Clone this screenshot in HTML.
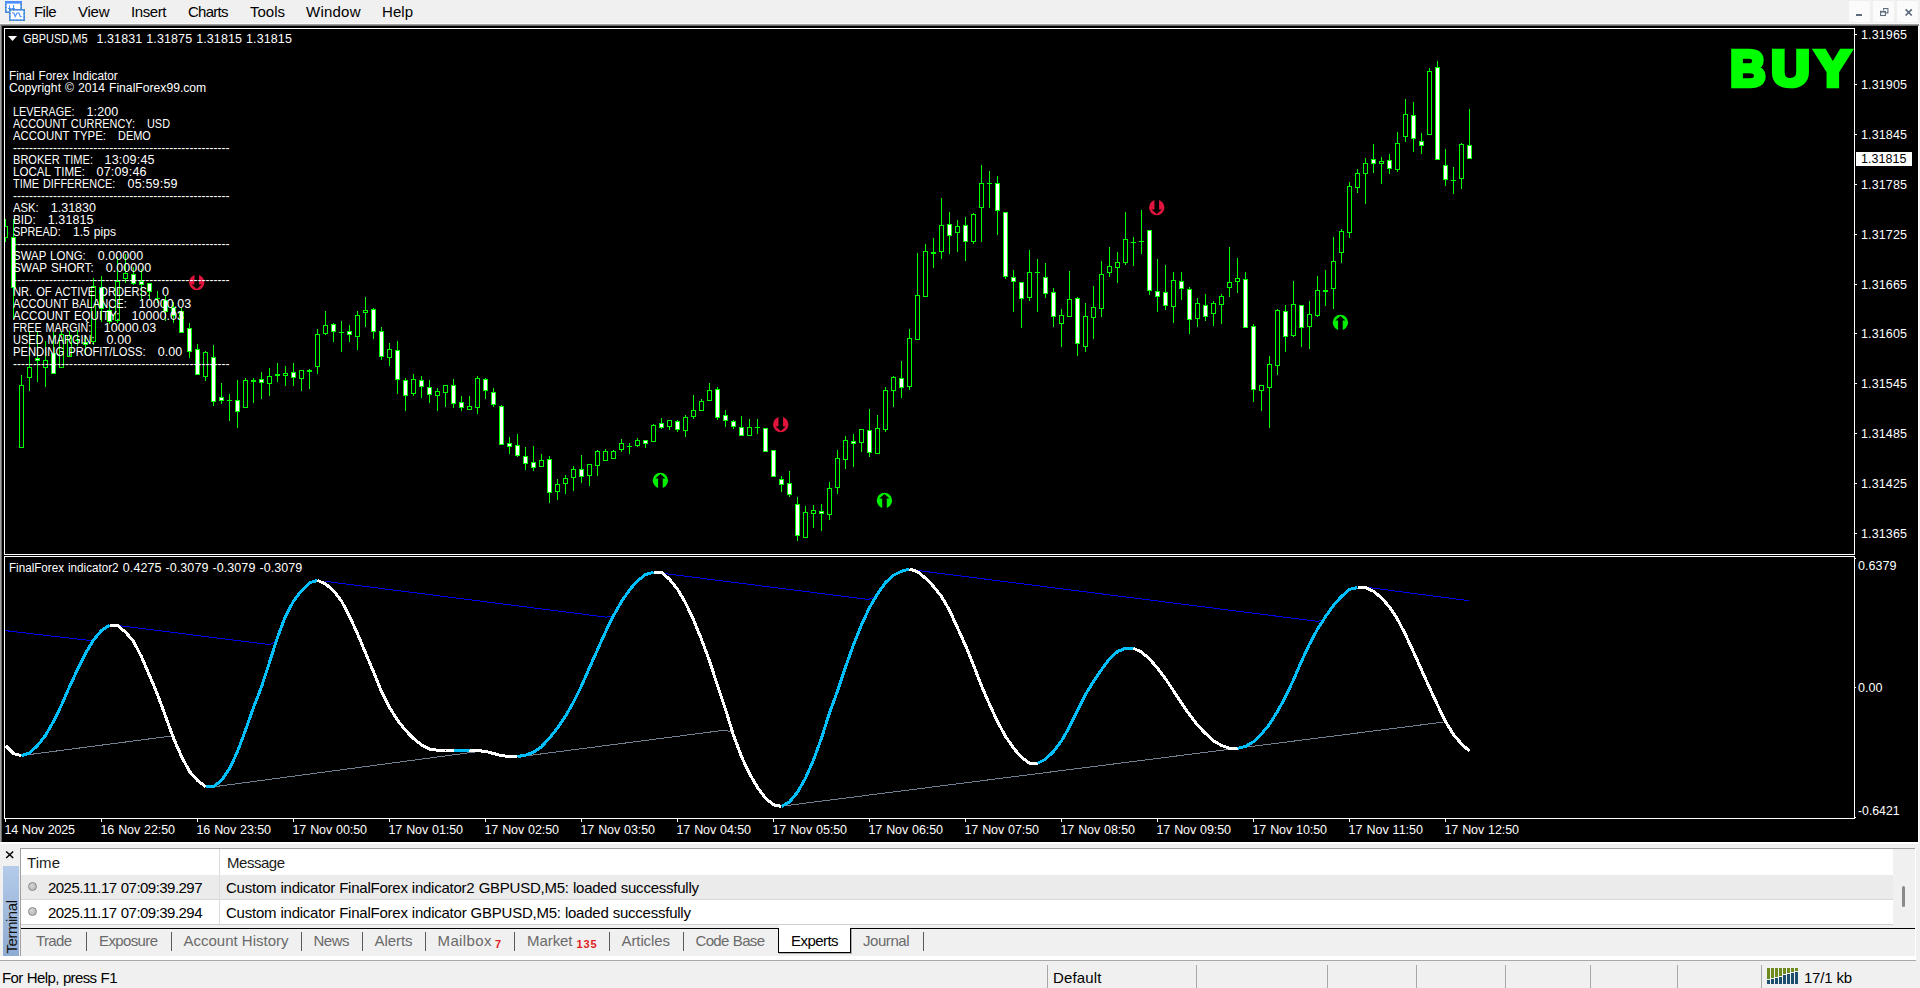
<!DOCTYPE html>
<html lang="en"><head><meta charset="utf-8"><title>GBPUSD,M5</title>
<style>
html,body{margin:0;padding:0;}
body{width:1920px;height:988px;overflow:hidden;background:#f0f0f0;position:relative;font-family:"Liberation Sans", Arial, sans-serif;}
.t{position:absolute;white-space:pre;line-height:1;font-family:"Liberation Sans", Arial, sans-serif;}
.abs{position:absolute;}
#menubar{position:absolute;left:0;top:0;width:1920px;height:24px;background:#f0f0f0;}
#mdi{position:absolute;left:0;top:24px;width:1920px;height:818px;background:#000;}
.wb{position:absolute;top:1px;width:21px;height:21px;background:#fbfbfb;border-radius:2px;}
</style></head><body>

<div id="menubar">
<svg class="abs" style="left:4px;top:0" width="24" height="24" viewBox="0 0 24 24">
<rect x="1.8" y="1.8" width="15.4" height="10.4" fill="#fff" stroke="#4c8dff" stroke-width="1.600"/>
<rect x="1.8" y="1.8" width="15.4" height="10.4" fill="none" stroke="#4a8c80" stroke-width="1.600" stroke-dasharray="1 2.500"/>
<rect x="1" y="1" width="17" height="2.600" fill="#4c8dff"/>
<path d="M4 8.500h3.500M5.500 5.500v5M8 8.500h3M9.500 5v4" stroke="#4c8dff" stroke-width="1.100" fill="none"/>
<rect x="5.800" y="9.800" width="14.400" height="10.400" fill="#fff" stroke="#4c8dff" stroke-width="1.600"/>
<rect x="5.800" y="9.800" width="14.400" height="10.400" fill="none" stroke="#4a8c80" stroke-width="1.600" stroke-dasharray="1 2.500"/>
<path d="M8 13h2l1.200 3.500l1.800-3.500h2l1.200 3.500h1.500" stroke="#4c8dff" stroke-width="1.100" fill="none"/>
</svg>
<span class="t" style="left:34.00px;top:4.30px;font-size:15px;color:#000;letter-spacing:-0.557px;">File</span>
<span class="t" style="left:78.00px;top:4.30px;font-size:15px;color:#000;letter-spacing:-0.248px;">View</span>
<span class="t" style="left:131.00px;top:4.30px;font-size:15px;color:#000;letter-spacing:-0.403px;">Insert</span>
<span class="t" style="left:188.00px;top:4.30px;font-size:15px;color:#000;letter-spacing:-0.736px;">Charts</span>
<span class="t" style="left:250.00px;top:4.30px;font-size:15px;color:#000;letter-spacing:-0.004px;">Tools</span>
<span class="t" style="left:306.00px;top:4.30px;font-size:15px;color:#000;letter-spacing:0.230px;">Window</span>
<span class="t" style="left:382.00px;top:4.30px;font-size:15px;color:#000;letter-spacing:0.050px;">Help</span>
<div class="wb" style="left:1849px"></div>
<div class="wb" style="left:1873px"></div>
<div class="wb" style="left:1897px"></div>
<svg class="abs" style="left:1849px;top:1px" width="69" height="21" viewBox="0 0 69 21">
<rect x="7" y="13" width="6" height="2" fill="#5d6b7c"/>
<path d="M34.600 9.200v-1.700h4.300v4.400h-1.800" fill="none" stroke="#5d6b7c" stroke-width="1.100"/>
<rect x="31.600" y="10.500" width="4.800" height="4" fill="none" stroke="#5d6b7c" stroke-width="1.100"/>
<rect x="31" y="9.900" width="6" height="1.600" fill="#5d6b7c"/>
<path d="M56.600 8.300l6.200 6.200M62.800 8.300l-6.200 6.200" stroke="#5d6b7c" stroke-width="1.700" fill="none"/>
</svg>
</div>
<div class="abs" style="left:0;top:23px;width:1920px;height:1px;background:#fafafa"></div>
<div class="abs" style="left:0;top:24px;width:1919px;height:1px;background:#a0a0a0"></div>
<div class="abs" style="left:1px;top:25px;width:1918px;height:1px;background:#696969"></div>
<div class="abs" style="left:0;top:26px;width:1918px;height:816px;background:#000"></div>
<div class="abs" style="left:0;top:24px;width:1px;height:819px;background:#a0a0a0"></div>
<div class="abs" style="left:1px;top:25px;width:1px;height:817px;background:#696969"></div>
<svg class="abs" style="left:0;top:0" width="1920" height="845" viewBox="0 0 1920 845" shape-rendering="crispEdges"><rect x="4" y="28" width="1851" height="1" fill="#fff"/>
<rect x="4" y="554" width="1851" height="1" fill="#fff"/>
<rect x="4" y="28" width="1" height="527" fill="#fff"/>
<rect x="1854" y="28" width="1" height="527" fill="#fff"/>
<rect x="4" y="556" width="1851" height="1" fill="#fff"/>
<rect x="4" y="818" width="1851" height="1" fill="#fff"/>
<rect x="4" y="556" width="1" height="263" fill="#fff"/>
<rect x="1854" y="556" width="1" height="263" fill="#fff"/>
<rect x="1855" y="34" width="2" height="1" fill="#fff"/>
<rect x="1855" y="84" width="2" height="1" fill="#fff"/>
<rect x="1855" y="134" width="2" height="1" fill="#fff"/>
<rect x="1855" y="184" width="2" height="1" fill="#fff"/>
<rect x="1855" y="234" width="2" height="1" fill="#fff"/>
<rect x="1855" y="284" width="2" height="1" fill="#fff"/>
<rect x="1855" y="333" width="2" height="1" fill="#fff"/>
<rect x="1855" y="383" width="2" height="1" fill="#fff"/>
<rect x="1855" y="433" width="2" height="1" fill="#fff"/>
<rect x="1855" y="483" width="2" height="1" fill="#fff"/>
<rect x="1855" y="533" width="2" height="1" fill="#fff"/>
<rect x="1855" y="558" width="1" height="1" fill="#fff"/>
<rect x="1855" y="687" width="1" height="1" fill="#fff"/>
<rect x="1855" y="817" width="1" height="1" fill="#fff"/>
<rect x="5" y="819" width="1" height="3" fill="#fff"/>
<rect x="101" y="819" width="1" height="3" fill="#fff"/>
<rect x="197" y="819" width="1" height="3" fill="#fff"/>
<rect x="293" y="819" width="1" height="3" fill="#fff"/>
<rect x="389" y="819" width="1" height="3" fill="#fff"/>
<rect x="485" y="819" width="1" height="3" fill="#fff"/>
<rect x="581" y="819" width="1" height="3" fill="#fff"/>
<rect x="677" y="819" width="1" height="3" fill="#fff"/>
<rect x="773" y="819" width="1" height="3" fill="#fff"/>
<rect x="869" y="819" width="1" height="3" fill="#fff"/>
<rect x="965" y="819" width="1" height="3" fill="#fff"/>
<rect x="1061" y="819" width="1" height="3" fill="#fff"/>
<rect x="1157" y="819" width="1" height="3" fill="#fff"/>
<rect x="1253" y="819" width="1" height="3" fill="#fff"/>
<rect x="1349" y="819" width="1" height="3" fill="#fff"/>
<rect x="1445" y="819" width="1" height="3" fill="#fff"/>
<path d="M8 36h9l-4.500 5z" fill="#fff" shape-rendering="auto"/>
<rect x="5" y="219" width="1" height="23" fill="#00ff00"/>
<rect x="3" y="226" width="5" height="12" fill="#00ff00"/>
<rect x="4" y="227" width="3" height="10" fill="#000"/>
<rect x="13" y="219" width="1" height="100" fill="#00ff00"/>
<rect x="11" y="237" width="5" height="51" fill="#00ff00"/>
<rect x="12" y="238" width="3" height="49" fill="#fff"/>
<rect x="21" y="375" width="1" height="73" fill="#00ff00"/>
<rect x="19" y="385" width="5" height="63" fill="#00ff00"/>
<rect x="20" y="386" width="3" height="61" fill="#000"/>
<rect x="29" y="332" width="1" height="59" fill="#00ff00"/>
<rect x="27" y="367" width="5" height="11" fill="#00ff00"/>
<rect x="28" y="368" width="3" height="9" fill="#000"/>
<rect x="37" y="332" width="1" height="50" fill="#00ff00"/>
<rect x="35" y="358" width="5" height="3" fill="#00ff00"/>
<rect x="36" y="359" width="3" height="1" fill="#fff"/>
<rect x="45" y="341" width="1" height="46" fill="#00ff00"/>
<rect x="43" y="360" width="5" height="8" fill="#00ff00"/>
<rect x="44" y="361" width="3" height="6" fill="#000"/>
<rect x="53" y="332" width="1" height="42" fill="#00ff00"/>
<rect x="51" y="353" width="5" height="21" fill="#00ff00"/>
<rect x="52" y="354" width="3" height="19" fill="#fff"/>
<rect x="61" y="331" width="1" height="37" fill="#00ff00"/>
<rect x="59" y="334" width="5" height="34" fill="#00ff00"/>
<rect x="60" y="335" width="3" height="32" fill="#000"/>
<rect x="69" y="331" width="1" height="26" fill="#00ff00"/>
<rect x="67" y="335" width="5" height="22" fill="#00ff00"/>
<rect x="68" y="336" width="3" height="20" fill="#000"/>
<rect x="77" y="330" width="1" height="16" fill="#00ff00"/>
<rect x="75" y="340" width="5" height="1" fill="#00ff00"/>
<rect x="85" y="335" width="1" height="20" fill="#00ff00"/>
<rect x="83" y="342" width="5" height="3" fill="#00ff00"/>
<rect x="84" y="343" width="3" height="1" fill="#fff"/>
<rect x="93" y="278" width="1" height="67" fill="#00ff00"/>
<rect x="91" y="286" width="5" height="56" fill="#00ff00"/>
<rect x="92" y="287" width="3" height="54" fill="#000"/>
<rect x="101" y="276" width="1" height="46" fill="#00ff00"/>
<rect x="99" y="287" width="5" height="22" fill="#00ff00"/>
<rect x="100" y="288" width="3" height="20" fill="#fff"/>
<rect x="109" y="306" width="1" height="18" fill="#00ff00"/>
<rect x="107" y="310" width="5" height="12" fill="#00ff00"/>
<rect x="108" y="311" width="3" height="10" fill="#fff"/>
<rect x="117" y="257" width="1" height="66" fill="#00ff00"/>
<rect x="115" y="281" width="5" height="40" fill="#00ff00"/>
<rect x="116" y="282" width="3" height="38" fill="#000"/>
<rect x="125" y="254" width="1" height="29" fill="#00ff00"/>
<rect x="123" y="273" width="5" height="6" fill="#00ff00"/>
<rect x="124" y="274" width="3" height="4" fill="#000"/>
<rect x="133" y="267" width="1" height="18" fill="#00ff00"/>
<rect x="131" y="274" width="5" height="10" fill="#00ff00"/>
<rect x="132" y="275" width="3" height="8" fill="#fff"/>
<rect x="141" y="269" width="1" height="31" fill="#00ff00"/>
<rect x="139" y="281" width="5" height="4" fill="#00ff00"/>
<rect x="140" y="282" width="3" height="2" fill="#fff"/>
<rect x="149" y="283" width="1" height="16" fill="#00ff00"/>
<rect x="147" y="283" width="5" height="9" fill="#00ff00"/>
<rect x="148" y="284" width="3" height="7" fill="#fff"/>
<rect x="157" y="291" width="1" height="12" fill="#00ff00"/>
<rect x="155" y="298" width="5" height="1" fill="#00ff00"/>
<rect x="165" y="296" width="1" height="25" fill="#00ff00"/>
<rect x="163" y="300" width="5" height="12" fill="#00ff00"/>
<rect x="164" y="301" width="3" height="10" fill="#fff"/>
<rect x="173" y="302" width="1" height="21" fill="#00ff00"/>
<rect x="171" y="307" width="5" height="9" fill="#00ff00"/>
<rect x="172" y="308" width="3" height="7" fill="#fff"/>
<rect x="181" y="308" width="1" height="25" fill="#00ff00"/>
<rect x="179" y="311" width="5" height="22" fill="#00ff00"/>
<rect x="180" y="312" width="3" height="20" fill="#fff"/>
<rect x="189" y="323" width="1" height="35" fill="#00ff00"/>
<rect x="187" y="328" width="5" height="24" fill="#00ff00"/>
<rect x="188" y="329" width="3" height="22" fill="#fff"/>
<rect x="197" y="344" width="1" height="31" fill="#00ff00"/>
<rect x="195" y="349" width="5" height="26" fill="#00ff00"/>
<rect x="196" y="350" width="3" height="24" fill="#fff"/>
<rect x="205" y="351" width="1" height="30" fill="#00ff00"/>
<rect x="203" y="352" width="5" height="25" fill="#00ff00"/>
<rect x="204" y="353" width="3" height="23" fill="#000"/>
<rect x="213" y="345" width="1" height="61" fill="#00ff00"/>
<rect x="211" y="357" width="5" height="45" fill="#00ff00"/>
<rect x="212" y="358" width="3" height="43" fill="#fff"/>
<rect x="221" y="383" width="1" height="21" fill="#00ff00"/>
<rect x="219" y="397" width="5" height="4" fill="#00ff00"/>
<rect x="220" y="398" width="3" height="2" fill="#fff"/>
<rect x="229" y="394" width="1" height="27" fill="#00ff00"/>
<rect x="227" y="400" width="5" height="1" fill="#00ff00"/>
<rect x="237" y="380" width="1" height="48" fill="#00ff00"/>
<rect x="235" y="400" width="5" height="12" fill="#00ff00"/>
<rect x="236" y="401" width="3" height="10" fill="#fff"/>
<rect x="245" y="378" width="1" height="30" fill="#00ff00"/>
<rect x="243" y="380" width="5" height="28" fill="#00ff00"/>
<rect x="244" y="381" width="3" height="26" fill="#000"/>
<rect x="253" y="378" width="1" height="25" fill="#00ff00"/>
<rect x="251" y="380" width="5" height="2" fill="#00ff00"/>
<rect x="261" y="372" width="1" height="27" fill="#00ff00"/>
<rect x="259" y="379" width="5" height="4" fill="#00ff00"/>
<rect x="260" y="380" width="3" height="2" fill="#fff"/>
<rect x="269" y="368" width="1" height="28" fill="#00ff00"/>
<rect x="267" y="376" width="5" height="8" fill="#00ff00"/>
<rect x="268" y="377" width="3" height="6" fill="#000"/>
<rect x="277" y="363" width="1" height="19" fill="#00ff00"/>
<rect x="275" y="374" width="5" height="2" fill="#00ff00"/>
<rect x="285" y="366" width="1" height="20" fill="#00ff00"/>
<rect x="283" y="373" width="5" height="3" fill="#00ff00"/>
<rect x="284" y="374" width="3" height="1" fill="#000"/>
<rect x="293" y="363" width="1" height="23" fill="#00ff00"/>
<rect x="291" y="372" width="5" height="6" fill="#00ff00"/>
<rect x="292" y="373" width="3" height="4" fill="#fff"/>
<rect x="301" y="370" width="1" height="21" fill="#00ff00"/>
<rect x="299" y="370" width="5" height="9" fill="#00ff00"/>
<rect x="300" y="371" width="3" height="7" fill="#000"/>
<rect x="309" y="369" width="1" height="20" fill="#00ff00"/>
<rect x="307" y="370" width="5" height="2" fill="#00ff00"/>
<rect x="317" y="329" width="1" height="45" fill="#00ff00"/>
<rect x="315" y="334" width="5" height="33" fill="#00ff00"/>
<rect x="316" y="335" width="3" height="31" fill="#000"/>
<rect x="325" y="311" width="1" height="24" fill="#00ff00"/>
<rect x="323" y="325" width="5" height="9" fill="#00ff00"/>
<rect x="324" y="326" width="3" height="7" fill="#000"/>
<rect x="333" y="323" width="1" height="19" fill="#00ff00"/>
<rect x="331" y="324" width="5" height="8" fill="#00ff00"/>
<rect x="332" y="325" width="3" height="6" fill="#fff"/>
<rect x="341" y="321" width="1" height="31" fill="#00ff00"/>
<rect x="339" y="332" width="5" height="1" fill="#00ff00"/>
<rect x="349" y="325" width="1" height="17" fill="#00ff00"/>
<rect x="347" y="331" width="5" height="4" fill="#00ff00"/>
<rect x="348" y="332" width="3" height="2" fill="#fff"/>
<rect x="357" y="311" width="1" height="39" fill="#00ff00"/>
<rect x="355" y="315" width="5" height="22" fill="#00ff00"/>
<rect x="356" y="316" width="3" height="20" fill="#000"/>
<rect x="365" y="297" width="1" height="30" fill="#00ff00"/>
<rect x="363" y="310" width="5" height="3" fill="#00ff00"/>
<rect x="364" y="311" width="3" height="1" fill="#000"/>
<rect x="373" y="308" width="1" height="31" fill="#00ff00"/>
<rect x="371" y="309" width="5" height="23" fill="#00ff00"/>
<rect x="372" y="310" width="3" height="21" fill="#fff"/>
<rect x="381" y="327" width="1" height="33" fill="#00ff00"/>
<rect x="379" y="331" width="5" height="26" fill="#00ff00"/>
<rect x="380" y="332" width="3" height="24" fill="#fff"/>
<rect x="389" y="343" width="1" height="23" fill="#00ff00"/>
<rect x="387" y="349" width="5" height="9" fill="#00ff00"/>
<rect x="388" y="350" width="3" height="7" fill="#000"/>
<rect x="397" y="341" width="1" height="53" fill="#00ff00"/>
<rect x="395" y="350" width="5" height="30" fill="#00ff00"/>
<rect x="396" y="351" width="3" height="28" fill="#fff"/>
<rect x="405" y="378" width="1" height="33" fill="#00ff00"/>
<rect x="403" y="380" width="5" height="16" fill="#00ff00"/>
<rect x="404" y="381" width="3" height="14" fill="#fff"/>
<rect x="413" y="374" width="1" height="22" fill="#00ff00"/>
<rect x="411" y="379" width="5" height="15" fill="#00ff00"/>
<rect x="412" y="380" width="3" height="13" fill="#000"/>
<rect x="421" y="376" width="1" height="22" fill="#00ff00"/>
<rect x="419" y="380" width="5" height="7" fill="#00ff00"/>
<rect x="420" y="381" width="3" height="5" fill="#fff"/>
<rect x="429" y="380" width="1" height="23" fill="#00ff00"/>
<rect x="427" y="387" width="5" height="8" fill="#00ff00"/>
<rect x="428" y="388" width="3" height="6" fill="#fff"/>
<rect x="437" y="388" width="1" height="23" fill="#00ff00"/>
<rect x="435" y="391" width="5" height="5" fill="#00ff00"/>
<rect x="436" y="392" width="3" height="3" fill="#000"/>
<rect x="445" y="385" width="1" height="22" fill="#00ff00"/>
<rect x="443" y="385" width="5" height="8" fill="#00ff00"/>
<rect x="444" y="386" width="3" height="6" fill="#000"/>
<rect x="453" y="379" width="1" height="29" fill="#00ff00"/>
<rect x="451" y="385" width="5" height="19" fill="#00ff00"/>
<rect x="452" y="386" width="3" height="17" fill="#fff"/>
<rect x="461" y="396" width="1" height="15" fill="#00ff00"/>
<rect x="459" y="402" width="5" height="6" fill="#00ff00"/>
<rect x="460" y="403" width="3" height="4" fill="#fff"/>
<rect x="469" y="396" width="1" height="14" fill="#00ff00"/>
<rect x="467" y="406" width="5" height="4" fill="#00ff00"/>
<rect x="468" y="407" width="3" height="2" fill="#000"/>
<rect x="477" y="376" width="1" height="38" fill="#00ff00"/>
<rect x="475" y="378" width="5" height="30" fill="#00ff00"/>
<rect x="476" y="379" width="3" height="28" fill="#000"/>
<rect x="485" y="378" width="1" height="21" fill="#00ff00"/>
<rect x="483" y="379" width="5" height="12" fill="#00ff00"/>
<rect x="484" y="380" width="3" height="10" fill="#fff"/>
<rect x="493" y="388" width="1" height="19" fill="#00ff00"/>
<rect x="491" y="392" width="5" height="13" fill="#00ff00"/>
<rect x="492" y="393" width="3" height="11" fill="#fff"/>
<rect x="501" y="405" width="1" height="40" fill="#00ff00"/>
<rect x="499" y="406" width="5" height="39" fill="#00ff00"/>
<rect x="500" y="407" width="3" height="37" fill="#fff"/>
<rect x="509" y="437" width="1" height="17" fill="#00ff00"/>
<rect x="507" y="443" width="5" height="4" fill="#00ff00"/>
<rect x="508" y="444" width="3" height="2" fill="#fff"/>
<rect x="517" y="434" width="1" height="23" fill="#00ff00"/>
<rect x="515" y="445" width="5" height="11" fill="#00ff00"/>
<rect x="516" y="446" width="3" height="9" fill="#fff"/>
<rect x="525" y="447" width="1" height="23" fill="#00ff00"/>
<rect x="523" y="456" width="5" height="8" fill="#00ff00"/>
<rect x="524" y="457" width="3" height="6" fill="#fff"/>
<rect x="533" y="446" width="1" height="25" fill="#00ff00"/>
<rect x="531" y="462" width="5" height="6" fill="#00ff00"/>
<rect x="532" y="463" width="3" height="4" fill="#fff"/>
<rect x="541" y="454" width="1" height="13" fill="#00ff00"/>
<rect x="539" y="460" width="5" height="7" fill="#00ff00"/>
<rect x="540" y="461" width="3" height="5" fill="#000"/>
<rect x="549" y="456" width="1" height="47" fill="#00ff00"/>
<rect x="547" y="459" width="5" height="34" fill="#00ff00"/>
<rect x="548" y="460" width="3" height="32" fill="#fff"/>
<rect x="557" y="479" width="1" height="21" fill="#00ff00"/>
<rect x="555" y="484" width="5" height="8" fill="#00ff00"/>
<rect x="556" y="485" width="3" height="6" fill="#000"/>
<rect x="565" y="475" width="1" height="19" fill="#00ff00"/>
<rect x="563" y="478" width="5" height="6" fill="#00ff00"/>
<rect x="564" y="479" width="3" height="4" fill="#000"/>
<rect x="573" y="466" width="1" height="25" fill="#00ff00"/>
<rect x="571" y="469" width="5" height="9" fill="#00ff00"/>
<rect x="572" y="470" width="3" height="7" fill="#000"/>
<rect x="581" y="455" width="1" height="28" fill="#00ff00"/>
<rect x="579" y="469" width="5" height="8" fill="#00ff00"/>
<rect x="580" y="470" width="3" height="6" fill="#fff"/>
<rect x="589" y="464" width="1" height="22" fill="#00ff00"/>
<rect x="587" y="464" width="5" height="12" fill="#00ff00"/>
<rect x="588" y="465" width="3" height="10" fill="#000"/>
<rect x="597" y="450" width="1" height="26" fill="#00ff00"/>
<rect x="595" y="451" width="5" height="15" fill="#00ff00"/>
<rect x="596" y="452" width="3" height="13" fill="#000"/>
<rect x="605" y="449" width="1" height="12" fill="#00ff00"/>
<rect x="603" y="451" width="5" height="10" fill="#00ff00"/>
<rect x="604" y="452" width="3" height="8" fill="#000"/>
<rect x="613" y="450" width="1" height="9" fill="#00ff00"/>
<rect x="611" y="451" width="5" height="8" fill="#00ff00"/>
<rect x="612" y="452" width="3" height="6" fill="#000"/>
<rect x="621" y="439" width="1" height="13" fill="#00ff00"/>
<rect x="619" y="443" width="5" height="7" fill="#00ff00"/>
<rect x="620" y="444" width="3" height="5" fill="#000"/>
<rect x="629" y="443" width="1" height="11" fill="#00ff00"/>
<rect x="627" y="446" width="5" height="1" fill="#00ff00"/>
<rect x="637" y="438" width="1" height="9" fill="#00ff00"/>
<rect x="635" y="440" width="5" height="6" fill="#00ff00"/>
<rect x="636" y="441" width="3" height="4" fill="#000"/>
<rect x="645" y="440" width="1" height="8" fill="#00ff00"/>
<rect x="643" y="440" width="5" height="4" fill="#00ff00"/>
<rect x="644" y="441" width="3" height="2" fill="#fff"/>
<rect x="653" y="424" width="1" height="18" fill="#00ff00"/>
<rect x="651" y="425" width="5" height="17" fill="#00ff00"/>
<rect x="652" y="426" width="3" height="15" fill="#000"/>
<rect x="661" y="418" width="1" height="11" fill="#00ff00"/>
<rect x="659" y="423" width="5" height="5" fill="#00ff00"/>
<rect x="660" y="424" width="3" height="3" fill="#fff"/>
<rect x="669" y="420" width="1" height="10" fill="#00ff00"/>
<rect x="667" y="420" width="5" height="7" fill="#00ff00"/>
<rect x="668" y="421" width="3" height="5" fill="#000"/>
<rect x="677" y="420" width="1" height="12" fill="#00ff00"/>
<rect x="675" y="421" width="5" height="9" fill="#00ff00"/>
<rect x="676" y="422" width="3" height="7" fill="#fff"/>
<rect x="685" y="415" width="1" height="22" fill="#00ff00"/>
<rect x="683" y="417" width="5" height="14" fill="#00ff00"/>
<rect x="684" y="418" width="3" height="12" fill="#000"/>
<rect x="693" y="395" width="1" height="24" fill="#00ff00"/>
<rect x="691" y="410" width="5" height="7" fill="#00ff00"/>
<rect x="692" y="411" width="3" height="5" fill="#000"/>
<rect x="701" y="399" width="1" height="12" fill="#00ff00"/>
<rect x="699" y="401" width="5" height="10" fill="#00ff00"/>
<rect x="700" y="402" width="3" height="8" fill="#000"/>
<rect x="709" y="383" width="1" height="18" fill="#00ff00"/>
<rect x="707" y="390" width="5" height="11" fill="#00ff00"/>
<rect x="708" y="391" width="3" height="9" fill="#000"/>
<rect x="717" y="387" width="1" height="33" fill="#00ff00"/>
<rect x="715" y="389" width="5" height="29" fill="#00ff00"/>
<rect x="716" y="390" width="3" height="27" fill="#fff"/>
<rect x="725" y="410" width="1" height="17" fill="#00ff00"/>
<rect x="723" y="415" width="5" height="6" fill="#00ff00"/>
<rect x="724" y="416" width="3" height="4" fill="#fff"/>
<rect x="733" y="420" width="1" height="9" fill="#00ff00"/>
<rect x="731" y="421" width="5" height="6" fill="#00ff00"/>
<rect x="732" y="422" width="3" height="4" fill="#fff"/>
<rect x="741" y="416" width="1" height="20" fill="#00ff00"/>
<rect x="739" y="427" width="5" height="9" fill="#00ff00"/>
<rect x="740" y="428" width="3" height="7" fill="#fff"/>
<rect x="749" y="419" width="1" height="17" fill="#00ff00"/>
<rect x="747" y="427" width="5" height="9" fill="#00ff00"/>
<rect x="748" y="428" width="3" height="7" fill="#000"/>
<rect x="757" y="419" width="1" height="15" fill="#00ff00"/>
<rect x="755" y="427" width="5" height="1" fill="#00ff00"/>
<rect x="765" y="428" width="1" height="24" fill="#00ff00"/>
<rect x="763" y="428" width="5" height="24" fill="#00ff00"/>
<rect x="764" y="429" width="3" height="22" fill="#fff"/>
<rect x="773" y="450" width="1" height="27" fill="#00ff00"/>
<rect x="771" y="450" width="5" height="27" fill="#00ff00"/>
<rect x="772" y="451" width="3" height="25" fill="#fff"/>
<rect x="781" y="476" width="1" height="16" fill="#00ff00"/>
<rect x="779" y="479" width="5" height="6" fill="#00ff00"/>
<rect x="780" y="480" width="3" height="4" fill="#fff"/>
<rect x="789" y="471" width="1" height="26" fill="#00ff00"/>
<rect x="787" y="483" width="5" height="12" fill="#00ff00"/>
<rect x="788" y="484" width="3" height="10" fill="#fff"/>
<rect x="797" y="497" width="1" height="44" fill="#00ff00"/>
<rect x="795" y="504" width="5" height="32" fill="#00ff00"/>
<rect x="796" y="505" width="3" height="30" fill="#fff"/>
<rect x="805" y="506" width="1" height="32" fill="#00ff00"/>
<rect x="803" y="512" width="5" height="26" fill="#00ff00"/>
<rect x="804" y="513" width="3" height="24" fill="#000"/>
<rect x="813" y="505" width="1" height="23" fill="#00ff00"/>
<rect x="811" y="510" width="5" height="4" fill="#00ff00"/>
<rect x="812" y="511" width="3" height="2" fill="#000"/>
<rect x="821" y="504" width="1" height="27" fill="#00ff00"/>
<rect x="819" y="511" width="5" height="3" fill="#00ff00"/>
<rect x="820" y="512" width="3" height="1" fill="#fff"/>
<rect x="829" y="482" width="1" height="38" fill="#00ff00"/>
<rect x="827" y="488" width="5" height="27" fill="#00ff00"/>
<rect x="828" y="489" width="3" height="25" fill="#000"/>
<rect x="837" y="450" width="1" height="44" fill="#00ff00"/>
<rect x="835" y="458" width="5" height="30" fill="#00ff00"/>
<rect x="836" y="459" width="3" height="28" fill="#000"/>
<rect x="845" y="436" width="1" height="33" fill="#00ff00"/>
<rect x="843" y="440" width="5" height="20" fill="#00ff00"/>
<rect x="844" y="441" width="3" height="18" fill="#000"/>
<rect x="853" y="434" width="1" height="33" fill="#00ff00"/>
<rect x="851" y="441" width="5" height="3" fill="#00ff00"/>
<rect x="852" y="442" width="3" height="1" fill="#fff"/>
<rect x="861" y="429" width="1" height="23" fill="#00ff00"/>
<rect x="859" y="429" width="5" height="14" fill="#00ff00"/>
<rect x="860" y="430" width="3" height="12" fill="#000"/>
<rect x="869" y="409" width="1" height="48" fill="#00ff00"/>
<rect x="867" y="430" width="5" height="23" fill="#00ff00"/>
<rect x="868" y="431" width="3" height="21" fill="#fff"/>
<rect x="877" y="415" width="1" height="39" fill="#00ff00"/>
<rect x="875" y="428" width="5" height="26" fill="#00ff00"/>
<rect x="876" y="429" width="3" height="24" fill="#000"/>
<rect x="885" y="387" width="1" height="45" fill="#00ff00"/>
<rect x="883" y="390" width="5" height="40" fill="#00ff00"/>
<rect x="884" y="391" width="3" height="38" fill="#000"/>
<rect x="893" y="376" width="1" height="31" fill="#00ff00"/>
<rect x="891" y="377" width="5" height="14" fill="#00ff00"/>
<rect x="892" y="378" width="3" height="12" fill="#000"/>
<rect x="901" y="361" width="1" height="37" fill="#00ff00"/>
<rect x="899" y="378" width="5" height="10" fill="#00ff00"/>
<rect x="900" y="379" width="3" height="8" fill="#fff"/>
<rect x="909" y="329" width="1" height="61" fill="#00ff00"/>
<rect x="907" y="338" width="5" height="49" fill="#00ff00"/>
<rect x="908" y="339" width="3" height="47" fill="#000"/>
<rect x="917" y="253" width="1" height="87" fill="#00ff00"/>
<rect x="915" y="295" width="5" height="45" fill="#00ff00"/>
<rect x="916" y="296" width="3" height="43" fill="#000"/>
<rect x="925" y="244" width="1" height="53" fill="#00ff00"/>
<rect x="923" y="251" width="5" height="46" fill="#00ff00"/>
<rect x="924" y="252" width="3" height="44" fill="#000"/>
<rect x="933" y="238" width="1" height="30" fill="#00ff00"/>
<rect x="931" y="252" width="5" height="2" fill="#00ff00"/>
<rect x="941" y="198" width="1" height="61" fill="#00ff00"/>
<rect x="939" y="225" width="5" height="27" fill="#00ff00"/>
<rect x="940" y="226" width="3" height="25" fill="#000"/>
<rect x="949" y="212" width="1" height="42" fill="#00ff00"/>
<rect x="947" y="224" width="5" height="12" fill="#00ff00"/>
<rect x="948" y="225" width="3" height="10" fill="#fff"/>
<rect x="957" y="220" width="1" height="32" fill="#00ff00"/>
<rect x="955" y="226" width="5" height="7" fill="#00ff00"/>
<rect x="956" y="227" width="3" height="5" fill="#000"/>
<rect x="965" y="217" width="1" height="44" fill="#00ff00"/>
<rect x="963" y="225" width="5" height="17" fill="#00ff00"/>
<rect x="964" y="226" width="3" height="15" fill="#fff"/>
<rect x="973" y="213" width="1" height="31" fill="#00ff00"/>
<rect x="971" y="214" width="5" height="28" fill="#00ff00"/>
<rect x="972" y="215" width="3" height="26" fill="#000"/>
<rect x="981" y="165" width="1" height="77" fill="#00ff00"/>
<rect x="979" y="183" width="5" height="25" fill="#00ff00"/>
<rect x="980" y="184" width="3" height="23" fill="#000"/>
<rect x="989" y="171" width="1" height="37" fill="#00ff00"/>
<rect x="987" y="183" width="5" height="1" fill="#00ff00"/>
<rect x="997" y="176" width="1" height="59" fill="#00ff00"/>
<rect x="995" y="183" width="5" height="28" fill="#00ff00"/>
<rect x="996" y="184" width="3" height="26" fill="#fff"/>
<rect x="1005" y="212" width="1" height="67" fill="#00ff00"/>
<rect x="1003" y="212" width="5" height="65" fill="#00ff00"/>
<rect x="1004" y="213" width="3" height="63" fill="#fff"/>
<rect x="1013" y="270" width="1" height="42" fill="#00ff00"/>
<rect x="1011" y="277" width="5" height="5" fill="#00ff00"/>
<rect x="1012" y="278" width="3" height="3" fill="#fff"/>
<rect x="1021" y="282" width="1" height="46" fill="#00ff00"/>
<rect x="1019" y="282" width="5" height="17" fill="#00ff00"/>
<rect x="1020" y="283" width="3" height="15" fill="#fff"/>
<rect x="1029" y="250" width="1" height="51" fill="#00ff00"/>
<rect x="1027" y="272" width="5" height="26" fill="#00ff00"/>
<rect x="1028" y="273" width="3" height="24" fill="#000"/>
<rect x="1037" y="259" width="1" height="53" fill="#00ff00"/>
<rect x="1035" y="272" width="5" height="1" fill="#00ff00"/>
<rect x="1045" y="263" width="1" height="35" fill="#00ff00"/>
<rect x="1043" y="277" width="5" height="17" fill="#00ff00"/>
<rect x="1044" y="278" width="3" height="15" fill="#fff"/>
<rect x="1053" y="288" width="1" height="39" fill="#00ff00"/>
<rect x="1051" y="292" width="5" height="25" fill="#00ff00"/>
<rect x="1052" y="293" width="3" height="23" fill="#fff"/>
<rect x="1061" y="309" width="1" height="38" fill="#00ff00"/>
<rect x="1059" y="315" width="5" height="9" fill="#00ff00"/>
<rect x="1060" y="316" width="3" height="7" fill="#000"/>
<rect x="1069" y="271" width="1" height="46" fill="#00ff00"/>
<rect x="1067" y="299" width="5" height="18" fill="#00ff00"/>
<rect x="1068" y="300" width="3" height="16" fill="#000"/>
<rect x="1077" y="297" width="1" height="59" fill="#00ff00"/>
<rect x="1075" y="298" width="5" height="46" fill="#00ff00"/>
<rect x="1076" y="299" width="3" height="44" fill="#fff"/>
<rect x="1085" y="303" width="1" height="49" fill="#00ff00"/>
<rect x="1083" y="316" width="5" height="31" fill="#00ff00"/>
<rect x="1084" y="317" width="3" height="29" fill="#000"/>
<rect x="1093" y="286" width="1" height="53" fill="#00ff00"/>
<rect x="1091" y="307" width="5" height="11" fill="#00ff00"/>
<rect x="1092" y="308" width="3" height="9" fill="#000"/>
<rect x="1101" y="261" width="1" height="56" fill="#00ff00"/>
<rect x="1099" y="274" width="5" height="35" fill="#00ff00"/>
<rect x="1100" y="275" width="3" height="33" fill="#000"/>
<rect x="1109" y="247" width="1" height="30" fill="#00ff00"/>
<rect x="1107" y="266" width="5" height="7" fill="#00ff00"/>
<rect x="1108" y="267" width="3" height="5" fill="#000"/>
<rect x="1117" y="252" width="1" height="31" fill="#00ff00"/>
<rect x="1115" y="262" width="5" height="6" fill="#00ff00"/>
<rect x="1116" y="263" width="3" height="4" fill="#000"/>
<rect x="1125" y="212" width="1" height="53" fill="#00ff00"/>
<rect x="1123" y="239" width="5" height="24" fill="#00ff00"/>
<rect x="1124" y="240" width="3" height="22" fill="#000"/>
<rect x="1133" y="237" width="1" height="29" fill="#00ff00"/>
<rect x="1131" y="242" width="5" height="1" fill="#00ff00"/>
<rect x="1141" y="210" width="1" height="44" fill="#00ff00"/>
<rect x="1139" y="241" width="5" height="1" fill="#00ff00"/>
<rect x="1149" y="230" width="1" height="65" fill="#00ff00"/>
<rect x="1147" y="230" width="5" height="61" fill="#00ff00"/>
<rect x="1148" y="231" width="3" height="59" fill="#fff"/>
<rect x="1157" y="259" width="1" height="53" fill="#00ff00"/>
<rect x="1155" y="291" width="5" height="6" fill="#00ff00"/>
<rect x="1156" y="292" width="3" height="4" fill="#fff"/>
<rect x="1165" y="265" width="1" height="45" fill="#00ff00"/>
<rect x="1163" y="292" width="5" height="14" fill="#00ff00"/>
<rect x="1164" y="293" width="3" height="12" fill="#fff"/>
<rect x="1173" y="272" width="1" height="51" fill="#00ff00"/>
<rect x="1171" y="280" width="5" height="27" fill="#00ff00"/>
<rect x="1172" y="281" width="3" height="25" fill="#000"/>
<rect x="1181" y="272" width="1" height="28" fill="#00ff00"/>
<rect x="1179" y="281" width="5" height="8" fill="#00ff00"/>
<rect x="1180" y="282" width="3" height="6" fill="#fff"/>
<rect x="1189" y="287" width="1" height="47" fill="#00ff00"/>
<rect x="1187" y="289" width="5" height="31" fill="#00ff00"/>
<rect x="1188" y="290" width="3" height="29" fill="#fff"/>
<rect x="1197" y="298" width="1" height="29" fill="#00ff00"/>
<rect x="1195" y="303" width="5" height="16" fill="#00ff00"/>
<rect x="1196" y="304" width="3" height="14" fill="#000"/>
<rect x="1205" y="294" width="1" height="27" fill="#00ff00"/>
<rect x="1203" y="305" width="5" height="12" fill="#00ff00"/>
<rect x="1204" y="306" width="3" height="10" fill="#fff"/>
<rect x="1213" y="301" width="1" height="25" fill="#00ff00"/>
<rect x="1211" y="303" width="5" height="11" fill="#00ff00"/>
<rect x="1212" y="304" width="3" height="9" fill="#000"/>
<rect x="1221" y="294" width="1" height="30" fill="#00ff00"/>
<rect x="1219" y="296" width="5" height="9" fill="#00ff00"/>
<rect x="1220" y="297" width="3" height="7" fill="#000"/>
<rect x="1229" y="247" width="1" height="50" fill="#00ff00"/>
<rect x="1227" y="282" width="5" height="6" fill="#00ff00"/>
<rect x="1228" y="283" width="3" height="4" fill="#000"/>
<rect x="1237" y="258" width="1" height="35" fill="#00ff00"/>
<rect x="1235" y="278" width="5" height="4" fill="#00ff00"/>
<rect x="1236" y="279" width="3" height="2" fill="#000"/>
<rect x="1245" y="272" width="1" height="56" fill="#00ff00"/>
<rect x="1243" y="279" width="5" height="49" fill="#00ff00"/>
<rect x="1244" y="280" width="3" height="47" fill="#fff"/>
<rect x="1253" y="324" width="1" height="78" fill="#00ff00"/>
<rect x="1251" y="326" width="5" height="64" fill="#00ff00"/>
<rect x="1252" y="327" width="3" height="62" fill="#fff"/>
<rect x="1261" y="385" width="1" height="26" fill="#00ff00"/>
<rect x="1259" y="385" width="5" height="6" fill="#00ff00"/>
<rect x="1260" y="386" width="3" height="4" fill="#000"/>
<rect x="1269" y="356" width="1" height="72" fill="#00ff00"/>
<rect x="1267" y="364" width="5" height="24" fill="#00ff00"/>
<rect x="1268" y="365" width="3" height="22" fill="#000"/>
<rect x="1277" y="309" width="1" height="66" fill="#00ff00"/>
<rect x="1275" y="310" width="5" height="56" fill="#00ff00"/>
<rect x="1276" y="311" width="3" height="54" fill="#000"/>
<rect x="1285" y="305" width="1" height="47" fill="#00ff00"/>
<rect x="1283" y="311" width="5" height="26" fill="#00ff00"/>
<rect x="1284" y="312" width="3" height="24" fill="#fff"/>
<rect x="1293" y="281" width="1" height="56" fill="#00ff00"/>
<rect x="1291" y="304" width="5" height="32" fill="#00ff00"/>
<rect x="1292" y="305" width="3" height="30" fill="#000"/>
<rect x="1301" y="305" width="1" height="42" fill="#00ff00"/>
<rect x="1299" y="305" width="5" height="23" fill="#00ff00"/>
<rect x="1300" y="306" width="3" height="21" fill="#fff"/>
<rect x="1309" y="301" width="1" height="48" fill="#00ff00"/>
<rect x="1307" y="314" width="5" height="13" fill="#00ff00"/>
<rect x="1308" y="315" width="3" height="11" fill="#000"/>
<rect x="1317" y="276" width="1" height="41" fill="#00ff00"/>
<rect x="1315" y="290" width="5" height="26" fill="#00ff00"/>
<rect x="1316" y="291" width="3" height="24" fill="#000"/>
<rect x="1325" y="270" width="1" height="36" fill="#00ff00"/>
<rect x="1323" y="290" width="5" height="2" fill="#00ff00"/>
<rect x="1333" y="237" width="1" height="72" fill="#00ff00"/>
<rect x="1331" y="261" width="5" height="28" fill="#00ff00"/>
<rect x="1332" y="262" width="3" height="26" fill="#000"/>
<rect x="1341" y="229" width="1" height="34" fill="#00ff00"/>
<rect x="1339" y="231" width="5" height="22" fill="#00ff00"/>
<rect x="1340" y="232" width="3" height="20" fill="#000"/>
<rect x="1349" y="182" width="1" height="56" fill="#00ff00"/>
<rect x="1347" y="186" width="5" height="47" fill="#00ff00"/>
<rect x="1348" y="187" width="3" height="45" fill="#000"/>
<rect x="1357" y="169" width="1" height="24" fill="#00ff00"/>
<rect x="1355" y="173" width="5" height="15" fill="#00ff00"/>
<rect x="1356" y="174" width="3" height="13" fill="#000"/>
<rect x="1365" y="158" width="1" height="46" fill="#00ff00"/>
<rect x="1363" y="163" width="5" height="11" fill="#00ff00"/>
<rect x="1364" y="164" width="3" height="9" fill="#000"/>
<rect x="1373" y="144" width="1" height="29" fill="#00ff00"/>
<rect x="1371" y="159" width="5" height="5" fill="#00ff00"/>
<rect x="1372" y="160" width="3" height="3" fill="#fff"/>
<rect x="1381" y="157" width="1" height="27" fill="#00ff00"/>
<rect x="1379" y="161" width="5" height="3" fill="#00ff00"/>
<rect x="1380" y="162" width="3" height="1" fill="#000"/>
<rect x="1389" y="154" width="1" height="20" fill="#00ff00"/>
<rect x="1387" y="160" width="5" height="9" fill="#00ff00"/>
<rect x="1388" y="161" width="3" height="7" fill="#fff"/>
<rect x="1397" y="132" width="1" height="40" fill="#00ff00"/>
<rect x="1395" y="143" width="5" height="27" fill="#00ff00"/>
<rect x="1396" y="144" width="3" height="25" fill="#000"/>
<rect x="1405" y="99" width="1" height="43" fill="#00ff00"/>
<rect x="1403" y="114" width="5" height="23" fill="#00ff00"/>
<rect x="1404" y="115" width="3" height="21" fill="#000"/>
<rect x="1413" y="102" width="1" height="50" fill="#00ff00"/>
<rect x="1411" y="115" width="5" height="24" fill="#00ff00"/>
<rect x="1412" y="116" width="3" height="22" fill="#fff"/>
<rect x="1421" y="133" width="1" height="21" fill="#00ff00"/>
<rect x="1419" y="141" width="5" height="5" fill="#00ff00"/>
<rect x="1420" y="142" width="3" height="3" fill="#fff"/>
<rect x="1429" y="68" width="1" height="67" fill="#00ff00"/>
<rect x="1427" y="71" width="5" height="64" fill="#00ff00"/>
<rect x="1428" y="72" width="3" height="62" fill="#000"/>
<rect x="1437" y="61" width="1" height="99" fill="#00ff00"/>
<rect x="1435" y="67" width="5" height="93" fill="#00ff00"/>
<rect x="1436" y="68" width="3" height="91" fill="#fff"/>
<rect x="1445" y="149" width="1" height="37" fill="#00ff00"/>
<rect x="1443" y="165" width="5" height="15" fill="#00ff00"/>
<rect x="1444" y="166" width="3" height="13" fill="#fff"/>
<rect x="1453" y="167" width="1" height="27" fill="#00ff00"/>
<rect x="1451" y="180" width="5" height="1" fill="#00ff00"/>
<rect x="1461" y="143" width="1" height="46" fill="#00ff00"/>
<rect x="1459" y="144" width="5" height="35" fill="#00ff00"/>
<rect x="1460" y="145" width="3" height="33" fill="#000"/>
<rect x="1469" y="109" width="1" height="50" fill="#00ff00"/>
<rect x="1467" y="145" width="5" height="14" fill="#00ff00"/>
<rect x="1468" y="146" width="3" height="12" fill="#fff"/>
<rect x="0" y="28" width="4" height="527" fill="#000"/>
<rect x="0" y="26" width="1" height="816" fill="#a0a0a0"/>
<rect x="1" y="26" width="1" height="816" fill="#696969"/>
<rect x="4" y="28" width="1" height="527" fill="#fff"/></svg>
<svg class="abs" style="left:0;top:0" width="1920" height="845" viewBox="0 0 1920 845"><circle cx="196.75" cy="282.50" r="7.700" fill="#e0143c"/>
<polygon points="196.75,289.00 201.85,284.40 199.05,284.40 199.05,273.50 194.45,273.50 194.45,284.40 191.65,284.40" fill="#000"/>
<circle cx="780.75" cy="424.50" r="7.700" fill="#e0143c"/>
<polygon points="780.75,431.00 785.85,426.40 783.05,426.40 783.05,415.50 778.45,415.50 778.45,426.40 775.65,426.40" fill="#000"/>
<circle cx="1156.75" cy="207.50" r="7.700" fill="#e0143c"/>
<polygon points="1156.75,214.00 1161.85,209.40 1159.05,209.40 1159.05,198.50 1154.45,198.50 1154.45,209.40 1151.65,209.40" fill="#000"/>
<circle cx="660.40" cy="480.50" r="7.700" fill="#00f000"/>
<polygon points="660.40,474.00 665.50,478.60 662.70,478.60 662.70,489.50 658.10,489.50 658.10,478.60 655.30,478.60" fill="#000"/>
<circle cx="884.45" cy="500.50" r="7.700" fill="#00f000"/>
<polygon points="884.45,494.00 889.55,498.60 886.75,498.60 886.75,509.50 882.15,509.50 882.15,498.60 879.35,498.60" fill="#000"/>
<circle cx="1340.40" cy="322.50" r="7.700" fill="#00f000"/>
<polygon points="1340.40,316.00 1345.50,320.60 1342.70,320.60 1342.70,331.50 1338.10,331.50 1338.10,320.60 1335.30,320.60" fill="#000"/></svg>
<svg class="abs" style="left:0;top:0" width="1920" height="845" viewBox="0 0 1920 845"><line x1="5.0" y1="630.6" x2="92.5" y2="640.8" stroke="#0000f0" stroke-width="1" shape-rendering="crispEdges"/>
<line x1="118.0" y1="625.5" x2="269.6" y2="644.6" stroke="#0000f0" stroke-width="1" shape-rendering="crispEdges"/>
<line x1="325.0" y1="581.3" x2="606.6" y2="617.2" stroke="#0000f0" stroke-width="1" shape-rendering="crispEdges"/>
<line x1="661.8" y1="573.2" x2="868.4" y2="599.5" stroke="#0000f0" stroke-width="1" shape-rendering="crispEdges"/>
<line x1="918.4" y1="570.6" x2="1317.1" y2="621.3" stroke="#0000f0" stroke-width="1" shape-rendering="crispEdges"/>
<line x1="1368.4" y1="587.5" x2="1469.1" y2="600.7" stroke="#0000f0" stroke-width="1" shape-rendering="crispEdges"/>
<line x1="269.6" y1="644.6" x2="275.0" y2="641.8" stroke="#0000f0" stroke-width="1" shape-rendering="crispEdges"/>
<line x1="606.6" y1="617.2" x2="611.8" y2="616.0" stroke="#0000f0" stroke-width="1" shape-rendering="crispEdges"/>
<line x1="868.4" y1="599.5" x2="875.0" y2="596.5" stroke="#0000f0" stroke-width="1" shape-rendering="crispEdges"/>
<line x1="1317.1" y1="621.3" x2="1323.7" y2="620.4" stroke="#0000f0" stroke-width="1" shape-rendering="crispEdges"/>
<line x1="22.8" y1="755.4" x2="171.6" y2="736.0" stroke="#708090" stroke-width="1" shape-rendering="crispEdges"/>
<line x1="214.3" y1="786.7" x2="478.0" y2="751.6" stroke="#708090" stroke-width="1" shape-rendering="crispEdges"/>
<line x1="522.0" y1="756.4" x2="725.3" y2="730.1" stroke="#708090" stroke-width="1" shape-rendering="crispEdges"/>
<line x1="784.5" y1="805.8" x2="1443.4" y2="722.1" stroke="#708090" stroke-width="1" shape-rendering="crispEdges"/>
<line x1="725.3" y1="730.1" x2="730.5" y2="732.0" stroke="#708090" stroke-width="1" shape-rendering="crispEdges"/>
<path d="M5.5 745.6 L13.5 753.6 L21.5 755.6" fill="none" stroke="#fff" stroke-width="3" stroke-linejoin="round" stroke-linecap="butt" shape-rendering="crispEdges"/>
<path d="M21.5 755.6 L29.5 753.0 L37.5 745.6 L45.5 735.4 L53.5 721.5 L61.5 705.1 L69.5 686.8 L77.5 669.6 L85.5 653.4 L93.5 640.1 L101.5 630.4 L109.5 625.4" fill="none" stroke="#00bfff" stroke-width="3" stroke-linejoin="round" stroke-linecap="butt" shape-rendering="crispEdges"/>
<path d="M109.5 625.4 L117.5 625.4 L125.5 632.2 L133.5 641.3 L141.5 656.8 L149.5 675.4 L157.5 694.4 L165.5 716.2 L173.5 738.1 L181.5 756.5 L189.5 771.4 L197.5 780.4 L205.5 786.7" fill="none" stroke="#fff" stroke-width="3" stroke-linejoin="round" stroke-linecap="butt" shape-rendering="crispEdges"/>
<path d="M205.5 786.7 L213.5 786.7 L221.5 780.3 L229.5 768.7 L237.5 751.6 L245.5 730.2 L253.5 707.5 L261.5 686.9 L269.5 662.3 L277.5 637.4 L285.5 616.1 L293.5 601.1 L301.5 590.7 L309.5 582.8 L317.5 580.4" fill="none" stroke="#00bfff" stroke-width="3" stroke-linejoin="round" stroke-linecap="butt" shape-rendering="crispEdges"/>
<path d="M317.5 580.4 L325.5 583.9 L333.5 590.7 L341.5 601.1 L349.5 616.1 L357.5 633.8 L365.5 652.8 L373.5 671.9 L381.5 691.6 L389.5 707.4 L397.5 720.1 L405.5 730.3 L413.5 738.5 L421.5 745.0 L429.5 749.0 L437.5 750.3 L445.5 750.5 L453.5 750.5" fill="none" stroke="#fff" stroke-width="3" stroke-linejoin="round" stroke-linecap="butt" shape-rendering="crispEdges"/>
<path d="M453.5 750.5 L461.5 750.5 L469.5 750.5" fill="none" stroke="#00bfff" stroke-width="3" stroke-linejoin="round" stroke-linecap="butt" shape-rendering="crispEdges"/>
<path d="M469.5 750.5 L477.5 750.6 L485.5 751.4 L493.5 753.5 L501.5 755.7 L509.5 756.4 L517.5 756.5" fill="none" stroke="#fff" stroke-width="3" stroke-linejoin="round" stroke-linecap="butt" shape-rendering="crispEdges"/>
<path d="M517.5 756.5 L525.5 755.2 L533.5 752.3 L541.5 746.7 L549.5 738.0 L557.5 727.9 L565.5 716.1 L573.5 702.1 L581.5 685.9 L589.5 667.6 L597.5 649.8 L605.5 631.9 L613.5 615.7 L621.5 601.6 L629.5 589.9 L637.5 580.7 L645.5 574.6 L653.5 572.4" fill="none" stroke="#00bfff" stroke-width="3" stroke-linejoin="round" stroke-linecap="butt" shape-rendering="crispEdges"/>
<path d="M653.5 572.4 L661.5 572.4 L669.5 579.3 L677.5 589.1 L685.5 602.8 L693.5 619.8 L701.5 639.4 L709.5 660.8 L717.5 685.7 L725.5 709.3 L733.5 735.3 L741.5 756.7 L749.5 773.8 L757.5 787.4 L765.5 798.1 L773.5 804.8 L781.5 806.4" fill="none" stroke="#fff" stroke-width="3" stroke-linejoin="round" stroke-linecap="butt" shape-rendering="crispEdges"/>
<path d="M781.5 806.4 L789.5 801.9 L797.5 792.2 L805.5 778.2 L813.5 760.0 L821.5 738.1 L829.5 712.8 L837.5 691.2 L845.5 667.0 L853.5 644.9 L861.5 624.9 L869.5 607.5 L877.5 593.9 L885.5 582.5 L893.5 575.3 L901.5 571.3 L909.5 569.1" fill="none" stroke="#00bfff" stroke-width="3" stroke-linejoin="round" stroke-linecap="butt" shape-rendering="crispEdges"/>
<path d="M909.5 569.1 L917.5 571.7 L925.5 578.2 L933.5 586.4 L941.5 596.6 L949.5 610.3 L957.5 627.8 L965.5 645.5 L973.5 665.2 L981.5 685.9 L989.5 704.2 L997.5 721.6 L1005.5 736.3 L1013.5 748.1 L1021.5 757.3 L1029.5 763.3 L1037.5 763.3" fill="none" stroke="#fff" stroke-width="3" stroke-linejoin="round" stroke-linecap="butt" shape-rendering="crispEdges"/>
<path d="M1037.5 763.3 L1045.5 759.3 L1053.5 751.5 L1061.5 741.0 L1069.5 726.8 L1077.5 710.8 L1085.5 694.5 L1093.5 681.5 L1101.5 669.7 L1109.5 658.8 L1117.5 651.5 L1125.5 648.3 L1133.5 648.3" fill="none" stroke="#00bfff" stroke-width="3" stroke-linejoin="round" stroke-linecap="butt" shape-rendering="crispEdges"/>
<path d="M1133.5 648.3 L1141.5 652.1 L1149.5 658.9 L1157.5 668.3 L1165.5 678.8 L1173.5 690.7 L1181.5 703.2 L1189.5 714.6 L1197.5 725.3 L1205.5 733.4 L1213.5 740.8 L1221.5 745.5 L1229.5 748.3 L1237.5 748.3" fill="none" stroke="#fff" stroke-width="3" stroke-linejoin="round" stroke-linecap="butt" shape-rendering="crispEdges"/>
<path d="M1237.5 748.3 L1245.5 746.4 L1253.5 741.7 L1261.5 734.0 L1269.5 724.3 L1277.5 711.4 L1285.5 696.8 L1293.5 679.9 L1301.5 661.3 L1309.5 644.1 L1317.5 629.1 L1325.5 616.7 L1333.5 605.4 L1341.5 596.4 L1349.5 589.4 L1357.5 587.5" fill="none" stroke="#00bfff" stroke-width="3" stroke-linejoin="round" stroke-linecap="butt" shape-rendering="crispEdges"/>
<path d="M1357.5 587.5 L1365.5 587.5 L1373.5 591.3 L1381.5 597.9 L1389.5 607.0 L1397.5 619.2 L1405.5 634.7 L1413.5 652.0 L1421.5 669.8 L1429.5 687.7 L1437.5 705.0 L1445.5 721.5 L1453.5 734.5 L1461.5 744.0 L1469.5 751.0" fill="none" stroke="#fff" stroke-width="3" stroke-linejoin="round" stroke-linecap="butt" shape-rendering="crispEdges"/></svg>
<span class="t" style="left:1861.00px;top:28.92px;font-size:12.5px;color:#fff;letter-spacing:0.136px;">1.31965</span>
<span class="t" style="left:1861.00px;top:78.92px;font-size:12.5px;color:#fff;letter-spacing:0.136px;">1.31905</span>
<span class="t" style="left:1861.00px;top:128.92px;font-size:12.5px;color:#fff;letter-spacing:0.136px;">1.31845</span>
<span class="t" style="left:1861.00px;top:178.92px;font-size:12.5px;color:#fff;letter-spacing:0.136px;">1.31785</span>
<span class="t" style="left:1861.00px;top:228.92px;font-size:12.5px;color:#fff;letter-spacing:0.136px;">1.31725</span>
<span class="t" style="left:1861.00px;top:278.92px;font-size:12.5px;color:#fff;letter-spacing:0.136px;">1.31665</span>
<span class="t" style="left:1861.00px;top:327.92px;font-size:12.5px;color:#fff;letter-spacing:0.136px;">1.31605</span>
<span class="t" style="left:1861.00px;top:377.92px;font-size:12.5px;color:#fff;letter-spacing:0.136px;">1.31545</span>
<span class="t" style="left:1861.00px;top:427.92px;font-size:12.5px;color:#fff;letter-spacing:0.136px;">1.31485</span>
<span class="t" style="left:1861.00px;top:477.92px;font-size:12.5px;color:#fff;letter-spacing:0.136px;">1.31425</span>
<span class="t" style="left:1861.00px;top:527.92px;font-size:12.5px;color:#fff;letter-spacing:0.136px;">1.31365</span>
<div class="abs" style="left:1856px;top:152px;width:56px;height:14px;background:#fff"></div>
<span class="t" style="left:1861.00px;top:153.42px;font-size:12.5px;color:#000;letter-spacing:0.052px;">1.31815</span>
<span class="t" style="left:1858.00px;top:560.42px;font-size:12.5px;color:#fff;letter-spacing:0.053px;">0.6379</span>
<span class="t" style="left:1858.00px;top:682.42px;font-size:12.5px;color:#fff;letter-spacing:0.057px;">0.00</span>
<span class="t" style="left:1858.00px;top:805.42px;font-size:12.5px;color:#fff;transform:scaleX(0.9789);transform-origin:0 0;">-0.6421</span>
<span class="t" style="left:4.50px;top:824.42px;font-size:12.5px;color:#fff;letter-spacing:-0.173px;word-spacing:0.673px;">14 Nov 2025</span>
<span class="t" style="left:100.50px;top:824.42px;font-size:12.5px;color:#fff;letter-spacing:-0.096px;word-spacing:0.596px;">16 Nov 22:50</span>
<span class="t" style="left:196.50px;top:824.42px;font-size:12.5px;color:#fff;letter-spacing:-0.096px;word-spacing:0.596px;">16 Nov 23:50</span>
<span class="t" style="left:292.50px;top:824.42px;font-size:12.5px;color:#fff;letter-spacing:-0.096px;word-spacing:0.596px;">17 Nov 00:50</span>
<span class="t" style="left:388.50px;top:824.42px;font-size:12.5px;color:#fff;letter-spacing:-0.096px;word-spacing:0.596px;">17 Nov 01:50</span>
<span class="t" style="left:484.50px;top:824.42px;font-size:12.5px;color:#fff;letter-spacing:-0.096px;word-spacing:0.596px;">17 Nov 02:50</span>
<span class="t" style="left:580.50px;top:824.42px;font-size:12.5px;color:#fff;letter-spacing:-0.096px;word-spacing:0.596px;">17 Nov 03:50</span>
<span class="t" style="left:676.50px;top:824.42px;font-size:12.5px;color:#fff;letter-spacing:-0.096px;word-spacing:0.596px;">17 Nov 04:50</span>
<span class="t" style="left:772.50px;top:824.42px;font-size:12.5px;color:#fff;letter-spacing:-0.096px;word-spacing:0.596px;">17 Nov 05:50</span>
<span class="t" style="left:868.50px;top:824.42px;font-size:12.5px;color:#fff;letter-spacing:-0.096px;word-spacing:0.596px;">17 Nov 06:50</span>
<span class="t" style="left:964.50px;top:824.42px;font-size:12.5px;color:#fff;letter-spacing:-0.096px;word-spacing:0.596px;">17 Nov 07:50</span>
<span class="t" style="left:1060.50px;top:824.42px;font-size:12.5px;color:#fff;letter-spacing:-0.096px;word-spacing:0.596px;">17 Nov 08:50</span>
<span class="t" style="left:1156.50px;top:824.42px;font-size:12.5px;color:#fff;letter-spacing:-0.096px;word-spacing:0.596px;">17 Nov 09:50</span>
<span class="t" style="left:1252.50px;top:824.42px;font-size:12.5px;color:#fff;letter-spacing:-0.096px;word-spacing:0.596px;">17 Nov 10:50</span>
<span class="t" style="left:1348.50px;top:824.42px;font-size:12.5px;color:#fff;letter-spacing:0.007px;word-spacing:0.493px;">17 Nov 11:50</span>
<span class="t" style="left:1444.50px;top:824.42px;font-size:12.5px;color:#fff;letter-spacing:-0.096px;word-spacing:0.596px;">17 Nov 12:50</span>
<span class="t" style="left:23.20px;top:33.42px;font-size:12.5px;color:#fff;transform:scaleX(0.8760);transform-origin:0 0;">GBPUSD,M5</span>
<span class="t" style="left:96.40px;top:33.42px;font-size:12.5px;color:#fff;letter-spacing:0.105px;word-spacing:0.395px;">1.31831 1.31875 1.31815 1.31815</span>
<span class="t" style="left:8.80px;top:562.42px;font-size:12.5px;color:#fff;transform:scaleX(0.9316);transform-origin:0 0;word-spacing:0.821px;">FinalForex indicator2</span>
<span class="t" style="left:122.80px;top:562.42px;font-size:12.5px;color:#fff;letter-spacing:0.083px;word-spacing:0.417px;">0.4275 -0.3079 -0.3079 -0.3079</span>
<span class="t" style="left:8.75px;top:70.42px;font-size:12.5px;color:#fff;transform:scaleX(0.9417);transform-origin:0 0;word-spacing:0.775px;">Final Forex Indicator</span>
<span class="t" style="left:8.75px;top:82.42px;font-size:12.5px;color:#fff;transform:scaleX(0.9721);transform-origin:0 0;word-spacing:0.642px;">Copyright © 2014 FinalForex99.com</span>
<span class="t" style="left:12.50px;top:106.42px;font-size:12.5px;color:#fff;transform:scaleX(0.8679);transform-origin:0 0;">LEVERAGE:</span>
<span class="t" style="left:86.50px;top:106.42px;font-size:12.5px;color:#fff;letter-spacing:0.117px;">1:200</span>
<span class="t" style="left:12.50px;top:118.42px;font-size:12.5px;color:#fff;transform:scaleX(0.8728);transform-origin:0 0;word-spacing:1.111px;">ACCOUNT CURRENCY:</span>
<span class="t" style="left:146.50px;top:118.42px;font-size:12.5px;color:#fff;transform:scaleX(0.8715);transform-origin:0 0;">USD</span>
<span class="t" style="left:12.50px;top:130.42px;font-size:12.5px;color:#fff;transform:scaleX(0.9130);transform-origin:0 0;word-spacing:0.908px;">ACCOUNT TYPE:</span>
<span class="t" style="left:117.50px;top:130.42px;font-size:12.5px;color:#fff;transform:scaleX(0.8733);transform-origin:0 0;">DEMO</span>
<span class="t" style="left:12.50px;top:154.42px;font-size:12.5px;color:#fff;transform:scaleX(0.8848);transform-origin:0 0;word-spacing:1.048px;">BROKER TIME:</span>
<span class="t" style="left:104.50px;top:154.42px;font-size:12.5px;color:#fff;letter-spacing:0.192px;">13:09:45</span>
<span class="t" style="left:12.50px;top:166.42px;font-size:12.5px;color:#fff;transform:scaleX(0.9235);transform-origin:0 0;word-spacing:0.859px;">LOCAL TIME:</span>
<span class="t" style="left:96.50px;top:166.42px;font-size:12.5px;color:#fff;letter-spacing:0.192px;">07:09:46</span>
<span class="t" style="left:13.00px;top:178.42px;font-size:12.5px;color:#fff;transform:scaleX(0.8679);transform-origin:0 0;word-spacing:1.136px;">TIME DIFFERENCE:</span>
<span class="t" style="left:127.50px;top:178.42px;font-size:12.5px;color:#fff;letter-spacing:0.192px;">05:59:59</span>
<span class="t" style="left:12.50px;top:202.42px;font-size:12.5px;color:#fff;transform:scaleX(0.9039);transform-origin:0 0;">ASK:</span>
<span class="t" style="left:50.75px;top:202.42px;font-size:12.5px;color:#fff;letter-spacing:0.011px;">1.31830</span>
<span class="t" style="left:12.50px;top:214.42px;font-size:12.5px;color:#fff;transform:scaleX(0.9358);transform-origin:0 0;">BID:</span>
<span class="t" style="left:47.75px;top:214.42px;font-size:12.5px;color:#fff;letter-spacing:0.094px;">1.31815</span>
<span class="t" style="left:12.50px;top:226.42px;font-size:12.5px;color:#fff;transform:scaleX(0.8701);transform-origin:0 0;">SPREAD:</span>
<span class="t" style="left:72.75px;top:226.42px;font-size:12.5px;color:#fff;transform:scaleX(0.9675);transform-origin:0 0;word-spacing:0.662px;">1.5 pips</span>
<span class="t" style="left:12.50px;top:250.42px;font-size:12.5px;color:#fff;transform:scaleX(0.9164);transform-origin:0 0;word-spacing:0.892px;">SWAP LONG:</span>
<span class="t" style="left:97.75px;top:250.42px;font-size:12.5px;color:#fff;letter-spacing:0.052px;">0.00000</span>
<span class="t" style="left:12.50px;top:262.42px;font-size:12.5px;color:#fff;transform:scaleX(0.9390);transform-origin:0 0;word-spacing:0.787px;">SWAP SHORT:</span>
<span class="t" style="left:105.75px;top:262.42px;font-size:12.5px;color:#fff;letter-spacing:0.052px;">0.00000</span>
<span class="t" style="left:12.50px;top:286.42px;font-size:12.5px;color:#fff;transform:scaleX(0.8910);transform-origin:0 0;word-spacing:1.017px;">NR. OF ACTIVE ORDERS:</span>
<span class="t" style="left:162.00px;top:286.42px;font-size:12.5px;color:#fff;">0</span>
<span class="t" style="left:12.50px;top:298.42px;font-size:12.5px;color:#fff;transform:scaleX(0.8893);transform-origin:0 0;word-spacing:1.025px;">ACCOUNT BALANCE:</span>
<span class="t" style="left:138.75px;top:298.42px;font-size:12.5px;color:#fff;letter-spacing:0.052px;">10000.03</span>
<span class="t" style="left:12.50px;top:310.42px;font-size:12.5px;color:#fff;transform:scaleX(0.9243);transform-origin:0 0;word-spacing:0.855px;">ACCOUNT EQUITY:</span>
<span class="t" style="left:131.50px;top:310.42px;font-size:12.5px;color:#fff;letter-spacing:0.052px;">10000.03</span>
<span class="t" style="left:12.50px;top:322.42px;font-size:12.5px;color:#fff;transform:scaleX(0.8553);transform-origin:0 0;word-spacing:1.204px;">FREE MARGIN:</span>
<span class="t" style="left:103.75px;top:322.42px;font-size:12.5px;color:#fff;letter-spacing:0.052px;">10000.03</span>
<span class="t" style="left:12.50px;top:334.42px;font-size:12.5px;color:#fff;transform:scaleX(0.8786);transform-origin:0 0;word-spacing:1.080px;">USED MARGIN:</span>
<span class="t" style="left:106.50px;top:334.42px;font-size:12.5px;color:#fff;letter-spacing:0.140px;">0.00</span>
<span class="t" style="left:12.50px;top:346.42px;font-size:12.5px;color:#fff;transform:scaleX(0.8981);transform-origin:0 0;word-spacing:0.981px;">PENDING PROFIT/LOSS:</span>
<span class="t" style="left:157.75px;top:346.42px;font-size:12.5px;color:#fff;letter-spacing:0.057px;">0.00</span>
<span class="t" style="left:13.00px;top:142.42px;font-size:12.5px;color:#fff;transform:scaleX(0.9630);transform-origin:0 0;">------------------------------------------------------</span>
<span class="t" style="left:13.00px;top:190.42px;font-size:12.5px;color:#fff;transform:scaleX(0.9630);transform-origin:0 0;">------------------------------------------------------</span>
<span class="t" style="left:13.00px;top:238.42px;font-size:12.5px;color:#fff;transform:scaleX(0.9630);transform-origin:0 0;">------------------------------------------------------</span>
<span class="t" style="left:13.00px;top:274.42px;font-size:12.5px;color:#fff;transform:scaleX(0.9630);transform-origin:0 0;">------------------------------------------------------</span>
<span class="t" style="left:13.00px;top:358.42px;font-size:12.5px;color:#fff;transform:scaleX(0.9630);transform-origin:0 0;">------------------------------------------------------</span>
<svg class="abs" style="left:1700px;top:30px" width="154" height="80" viewBox="1700 30 154 80"><g font-family='"Liberation Sans", Arial, sans-serif' font-weight="700" font-size="47.5" fill="#00ff00" stroke="#00ff00" stroke-width="4.5" stroke-linejoin="miter"><text transform="translate(1730.2,85.5) scale(1.03,1.04)">B</text><text transform="translate(1771.2,85.5) scale(1.12,1.04)">U</text><text transform="translate(1815.2,85.5) scale(1.11,1.04)">Y</text></g></svg>
<div class="abs" style="left:0;top:842px;width:1920px;height:146px;background:#f0f0f0"></div>
<div class="abs" style="left:0;top:842px;width:1919px;height:2px;background:#fff"></div>
<div class="abs" style="left:1918px;top:26px;width:1px;height:818px;background:#fff"></div>
<svg class="abs" style="left:5px;top:850px" width="10" height="10" viewBox="0 0 10 10"><path d="M1.200 1.500l7 6.500M8.200 1.500l-7 6.500" stroke="#000" stroke-width="1.500" fill="none"/></svg>
<div class="abs" style="left:3px;top:866px;width:16px;height:90px;background:linear-gradient(#b4cbea,#8eabd2)"></div>
<span class="t" style="left:11px;top:927px;font-size:15px;color:#111;transform:translate(-50%,-50%) rotate(-90deg);letter-spacing:-0.45px">Terminal</span>
<div class="abs" style="left:20px;top:848px;width:1895px;height:80px;background:#fff;border-top:1px solid #a0a0a0;border-left:1px solid #a0a0a0;box-sizing:border-box"></div>
<div class="abs" style="left:21px;top:875px;width:1872px;height:24px;background:#ebebeb"></div>
<div class="abs" style="left:21px;top:899px;width:1872px;height:1px;background:#d8d8d8"></div>
<div class="abs" style="left:21px;top:924px;width:1872px;height:1px;background:#d0d0d0"></div>
<div class="abs" style="left:21px;top:925px;width:1894px;height:3px;background:#f0f0f0"></div>
<div class="abs" style="left:219px;top:849px;width:1px;height:75px;background:#dcdcdc"></div>
<div class="abs" style="left:1893px;top:849px;width:22px;height:76px;background:#f0f0f0"></div>
<div class="abs" style="left:1902px;top:886px;width:3px;height:21px;background:#8a8a8a;border-radius:1.500px"></div>
<div class="abs" style="left:1915px;top:848px;width:1px;height:108px;background:#fdfdfd"></div>
<div class="abs" style="left:20px;top:848px;width:1px;height:108px;background:#a0a0a0"></div>
<span class="t" style="left:27.00px;top:855.30px;font-size:15px;color:#1a1a1a;letter-spacing:0.074px;">Time</span>
<span class="t" style="left:227.00px;top:855.30px;font-size:15px;color:#1a1a1a;letter-spacing:-0.478px;">Message</span>
<div class="abs" style="left:28px;top:882px;width:9px;height:9px;box-sizing:border-box;border:1.500px solid #878787;border-radius:50%;background:radial-gradient(circle at 35% 35%,#d6d6d6,#b0b0b0)"></div>
<span class="t" style="left:48.00px;top:879.80px;font-size:15px;color:#000;letter-spacing:-0.534px;word-spacing:0.534px;">2025.11.17 07:09:39.297</span>
<span class="t" style="left:226.00px;top:879.80px;font-size:15px;color:#000;letter-spacing:-0.237px;word-spacing:0.237px;">Custom indicator FinalForex indicator2 GBPUSD,M5: loaded successfully</span>
<div class="abs" style="left:28px;top:907px;width:9px;height:9px;box-sizing:border-box;border:1.500px solid #878787;border-radius:50%;background:radial-gradient(circle at 35% 35%,#d6d6d6,#b0b0b0)"></div>
<span class="t" style="left:48.00px;top:904.80px;font-size:15px;color:#000;letter-spacing:-0.534px;word-spacing:0.534px;">2025.11.17 07:09:39.294</span>
<span class="t" style="left:226.00px;top:904.80px;font-size:15px;color:#000;letter-spacing:-0.236px;word-spacing:0.236px;">Custom indicator FinalForex indicator GBPUSD,M5: loaded successfully</span>
<div class="abs" style="left:21px;top:928px;width:1894px;height:1px;background:#000"></div>
<span class="t" style="left:36.00px;top:932.80px;font-size:15px;color:#6a6a6a;letter-spacing:-0.657px;">Trade</span>
<span class="t" style="left:99.00px;top:932.80px;font-size:15px;color:#6a6a6a;letter-spacing:-0.624px;">Exposure</span>
<span class="t" style="left:183.50px;top:932.80px;font-size:15px;color:#6a6a6a;letter-spacing:-0.003px;word-spacing:0.003px;">Account History</span>
<span class="t" style="left:313.50px;top:932.80px;font-size:15px;color:#6a6a6a;letter-spacing:-0.503px;">News</span>
<span class="t" style="left:374.50px;top:932.80px;font-size:15px;color:#6a6a6a;letter-spacing:-0.069px;">Alerts</span>
<span class="t" style="left:437.50px;top:932.80px;font-size:15px;color:#6a6a6a;letter-spacing:0.385px;">Mailbox</span>
<span class="t" style="left:527.00px;top:932.80px;font-size:15px;color:#6a6a6a;letter-spacing:-0.069px;">Market</span>
<span class="t" style="left:621.50px;top:932.80px;font-size:15px;color:#6a6a6a;letter-spacing:-0.097px;">Articles</span>
<span class="t" style="left:695.50px;top:932.80px;font-size:15px;color:#6a6a6a;letter-spacing:-0.674px;word-spacing:0.674px;">Code Base</span>
<span class="t" style="left:863.00px;top:932.80px;font-size:15px;color:#6a6a6a;letter-spacing:-0.450px;">Journal</span>
<div class="abs" style="left:86px;top:932px;width:1px;height:19px;background:#5a5a5a"></div>
<div class="abs" style="left:171px;top:932px;width:1px;height:19px;background:#5a5a5a"></div>
<div class="abs" style="left:301px;top:932px;width:1px;height:19px;background:#5a5a5a"></div>
<div class="abs" style="left:362px;top:932px;width:1px;height:19px;background:#5a5a5a"></div>
<div class="abs" style="left:425px;top:932px;width:1px;height:19px;background:#5a5a5a"></div>
<div class="abs" style="left:514px;top:932px;width:1px;height:19px;background:#5a5a5a"></div>
<div class="abs" style="left:609px;top:932px;width:1px;height:19px;background:#5a5a5a"></div>
<div class="abs" style="left:683px;top:932px;width:1px;height:19px;background:#5a5a5a"></div>
<div class="abs" style="left:923px;top:932px;width:1px;height:19px;background:#5a5a5a"></div>
<span class="t" style="left:495.00px;top:939.19px;font-size:11px;color:#e02020;font-weight:700;">7</span>
<span class="t" style="left:576.50px;top:939.19px;font-size:11px;color:#e02020;letter-spacing:0.823px;font-weight:700;">135</span>
<div class="abs" style="left:778px;top:928px;width:73px;height:25px;background:#fff;border:1px solid #000;border-top:none;box-sizing:border-box;box-shadow:1px 1px 0 #b0b0b0"></div>
<div class="abs" style="left:779px;top:925px;width:71px;height:4px;background:#fff"></div>
<span class="t" style="left:791.00px;top:932.80px;font-size:15px;color:#000;letter-spacing:-0.559px;">Experts</span>
<div class="abs" style="left:0;top:956px;width:1916px;height:4px;background:#ffffff"></div>
<div class="abs" style="left:0;top:960px;width:1916px;height:1px;background:#a8a8a8"></div>
<span class="t" style="left:2.00px;top:969.80px;font-size:15px;color:#000;letter-spacing:-0.622px;word-spacing:0.622px;">For Help, press F1</span>
<div class="abs" style="left:1047px;top:965px;width:1px;height:23px;background:#a8a8a8"></div>
<div class="abs" style="left:1196px;top:965px;width:1px;height:23px;background:#a8a8a8"></div>
<div class="abs" style="left:1327px;top:965px;width:1px;height:23px;background:#a8a8a8"></div>
<div class="abs" style="left:1416px;top:965px;width:1px;height:23px;background:#a8a8a8"></div>
<div class="abs" style="left:1505px;top:965px;width:1px;height:23px;background:#a8a8a8"></div>
<div class="abs" style="left:1590px;top:965px;width:1px;height:23px;background:#a8a8a8"></div>
<div class="abs" style="left:1677px;top:965px;width:1px;height:23px;background:#a8a8a8"></div>
<div class="abs" style="left:1761px;top:965px;width:1px;height:23px;background:#a8a8a8"></div>
<span class="t" style="left:1053.00px;top:969.80px;font-size:15px;color:#000;letter-spacing:0.162px;">Default</span>
<span class="t" style="left:1804.00px;top:969.80px;font-size:15px;color:#000;letter-spacing:-0.241px;word-spacing:0.241px;">17/1 kb</span>
<svg class="abs" style="left:1767px;top:0" width="34" height="988" shape-rendering="crispEdges"><rect x="0" y="968" width="3" height="11" fill="#6e8a1e"/><rect x="0" y="980" width="3" height="4" fill="#1e4e6e"/><rect x="4" y="968" width="3" height="10" fill="#6e8a1e"/><rect x="4" y="979" width="3" height="5" fill="#1e4e6e"/><rect x="8" y="968" width="3" height="9" fill="#6e8a1e"/><rect x="8" y="978" width="3" height="6" fill="#1e4e6e"/><rect x="12" y="968" width="3" height="8" fill="#6e8a1e"/><rect x="12" y="977" width="3" height="7" fill="#1e4e6e"/><rect x="16" y="968" width="3" height="6" fill="#6e8a1e"/><rect x="16" y="975" width="3" height="9" fill="#1e4e6e"/><rect x="20" y="968" width="3" height="5" fill="#6e8a1e"/><rect x="20" y="974" width="3" height="10" fill="#1e4e6e"/><rect x="24" y="968" width="3" height="4" fill="#6e8a1e"/><rect x="24" y="973" width="3" height="11" fill="#1e4e6e"/><rect x="28" y="968" width="3" height="3" fill="#6e8a1e"/><rect x="28" y="972" width="3" height="12" fill="#1e4e6e"/></svg>
</body></html>
